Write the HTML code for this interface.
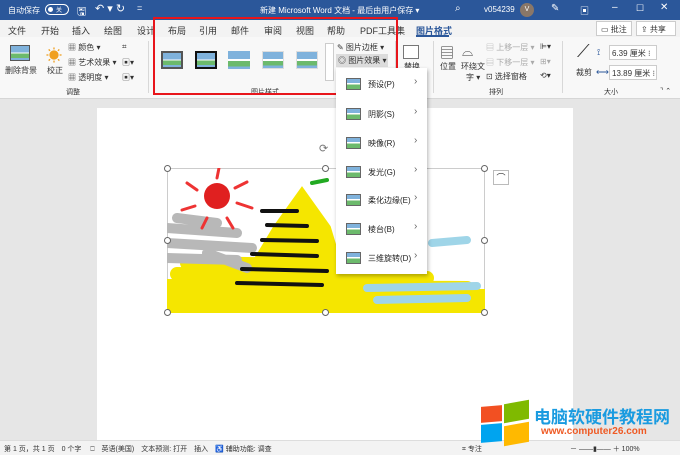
<!DOCTYPE html>
<html><head><meta charset="utf-8"><style>
*{margin:0;padding:0;box-sizing:border-box}
body{width:680px;height:455px;overflow:hidden;font-family:"Liberation Sans","Noto Sans CJK SC",sans-serif;font-size:9px;color:#333;position:relative;background:#e6e6e6}
.a{position:absolute}
.title{left:0;top:0;width:680px;height:20px;background:#2b579a;color:#fff}
.tabs{left:0;top:20px;width:680px;height:17px;background:#f3f3f3}
.rib{left:0;top:37px;width:680px;height:62px;background:#f8f8f8;border-bottom:1px solid #d6d6d6}
.t{position:absolute;white-space:nowrap}
.sep{position:absolute;top:41px;width:1px;height:52px;background:#d8d8d8}
.pic{position:absolute;width:30px;height:22px;border:1px solid #555;background:linear-gradient(#7fb2dc 0 45%,#fff 45% 55%,#6cba6c 55% 85%,#7fb2dc 85%)}
.mi{position:absolute;left:346px;width:80px;height:16px}
.mi .ic{position:absolute;left:0;top:0;width:15px;height:12px;border:1px solid #666;background:linear-gradient(#7fb2dc 0 40%,#fff 40% 55%,#6cba6c 55%)}
.mi .tx{position:absolute;left:22px;top:1px;font-size:8px;color:#222}
.mi .ar{position:absolute;left:68px;top:-2px;font-size:10px;color:#666}
.h{position:absolute;width:7px;height:7px;border:1px solid #666;border-radius:50%;background:#fff}
</style></head><body>
<div class="a title">
<span class="t" style="left:8px;top:5px;font-size:8px">自动保存</span>
<div class="a" style="left:45px;top:4px;width:24px;height:11px;border:1px solid #fff;border-radius:6px"><div class="a" style="left:2px;top:2px;width:5px;height:5px;background:#fff;border-radius:50%"></div><span class="t" style="left:10px;top:0;font-size:6px">关</span></div>
<span class="t" style="left:77px;top:3px;font-size:11px">🖫</span>
<span class="t" style="left:95px;top:2px;font-size:11px">↶ ▾ ↻</span>
<span class="t" style="left:137px;top:3px;font-size:9px">=</span>
<span class="t" style="left:260px;top:5px;font-size:8px">新建 Microsoft Word 文档 - 最后由用户保存 ▾</span>
<span class="t" style="left:455px;top:3px;font-size:10px">⌕</span>
<span class="t" style="left:484px;top:5px;font-size:8px">v054239</span>
<div class="a" style="left:520px;top:3px;width:14px;height:14px;border-radius:50%;background:#8a7768;text-align:center;font-size:7px;line-height:14px">V</div>
<span class="t" style="left:551px;top:3px;font-size:10px">✎</span>
<span class="t" style="left:580px;top:4px;font-size:9px">▣</span>
<span class="t" style="left:612px;top:2px;font-size:10px">–</span>
<span class="t" style="left:636px;top:3px;font-size:9px">☐</span>
<span class="t" style="left:660px;top:2px;font-size:10px">✕</span>
</div>
<div class="a tabs">
<span class="t" style="left:8px;top:4px">文件</span><span class="t" style="left:41px;top:4px">开始</span><span class="t" style="left:72px;top:4px">插入</span><span class="t" style="left:104px;top:4px">绘图</span><span class="t" style="left:137px;top:4px">设计</span><span class="t" style="left:168px;top:4px">布局</span><span class="t" style="left:199px;top:4px">引用</span><span class="t" style="left:231px;top:4px">邮件</span><span class="t" style="left:264px;top:4px">审阅</span><span class="t" style="left:296px;top:4px">视图</span><span class="t" style="left:327px;top:4px">帮助</span><span class="t" style="left:360px;top:4px">PDF工具集</span>
<span class="t" style="left:416px;top:4px;color:#2b579a;font-weight:bold">图片格式</span>
<div class="a" style="left:416px;top:15px;width:33px;height:2px;background:#2b579a"></div>
<div class="a" style="left:596px;top:1px;width:36px;height:15px;border:1px solid #ccc;background:#fff"><span class="t" style="left:4px;top:2px;font-size:8px">▭ 批注</span></div>
<div class="a" style="left:636px;top:1px;width:40px;height:15px;border:1px solid #ccc;background:#fff"><span class="t" style="left:4px;top:2px;font-size:8px">⇪ 共享</span></div>
</div>
<div class="a rib">
<div class="pic" style="left:10px;top:8px;width:20px;height:16px"></div>
<span class="t" style="left:5px;top:28px;font-size:8px">删除背景</span>
<span class="t" style="left:46px;top:5px;font-size:16px;color:#f0a020">☀</span>
<span class="t" style="left:47px;top:28px;font-size:8px">校正</span>
<span class="t" style="left:68px;top:5px;font-size:8px">▦ 颜色 ▾</span>
<span class="t" style="left:68px;top:20px;font-size:8px">▦ 艺术效果 ▾</span>
<span class="t" style="left:68px;top:35px;font-size:8px">▦ 透明度 ▾</span>
<span class="t" style="left:122px;top:5px;font-size:8px">⌗</span><span class="t" style="left:122px;top:20px;font-size:8px">▣▾</span><span class="t" style="left:122px;top:35px;font-size:8px">▣▾</span>
<span class="t" style="left:66px;top:50px;font-size:7px">调整</span>
<div class="pic" style="left:161px;top:14px;width:22px;height:18px;border:2px solid #555"></div>
<div class="pic" style="left:195px;top:14px;width:22px;height:18px;border:2px solid #111"></div>
<div class="pic" style="left:228px;top:14px;width:22px;height:18px;border:none"></div>
<div class="pic" style="left:262px;top:14px;width:22px;height:18px;border:1px solid #ddd"></div>
<div class="pic" style="left:296px;top:14px;width:22px;height:18px;border:1px solid #ddd"></div>
<div class="a" style="left:325px;top:6px;width:9px;height:38px;border:1px solid #ccc;background:#fff"></div>
<span class="t" style="left:251px;top:50px;font-size:7px">图片样式</span>
<span class="t" style="left:337px;top:5px;font-size:8px">✎ 图片边框 ▾</span>
<div class="a" style="left:336px;top:17px;width:52px;height:13px;background:#dcdcdc"></div>
<span class="t" style="left:338px;top:18px;font-size:8px">◎ 图片效果 ▾</span>
<div class="pic" style="left:403px;top:8px;width:16px;height:14px;border:1px solid #777;background:#fff"></div>
<span class="t" style="left:404px;top:24px;font-size:8px">替换</span>
<span class="t" style="left:440px;top:6px;font-size:14px">▤</span>
<span class="t" style="left:440px;top:24px;font-size:8px">位置</span>
<span class="t" style="left:462px;top:6px;font-size:14px">⌓</span>
<span class="t" style="left:461px;top:24px;font-size:8px">环绕文</span><span class="t" style="left:466px;top:35px;font-size:8px">字 ▾</span>
<span class="t" style="left:486px;top:5px;font-size:8px;color:#aaa">▤ 上移一层 ▾</span>
<span class="t" style="left:486px;top:20px;font-size:8px;color:#aaa">▤ 下移一层 ▾</span>
<span class="t" style="left:486px;top:34px;font-size:8px">⊡ 选择窗格</span>
<span class="t" style="left:540px;top:5px;font-size:8px">⊫▾</span><span class="t" style="left:540px;top:20px;font-size:8px;color:#aaa">⊞▾</span><span class="t" style="left:540px;top:34px;font-size:8px">⟲▾</span>
<span class="t" style="left:489px;top:50px;font-size:7px">排列</span>
<span class="t" style="left:577px;top:4px;font-size:18px">⟋</span>
<span class="t" style="left:576px;top:30px;font-size:8px">裁剪</span>
<span class="t" style="left:597px;top:10px;font-size:9px;color:#2b579a">⟟</span>
<div class="a" style="left:609px;top:8px;width:48px;height:15px;border:1px solid #ccc;background:#fff"><span class="t" style="left:2px;top:2px;font-size:8px">6.39 厘米 ⁝</span></div>
<span class="t" style="left:596px;top:30px;font-size:9px;color:#2b579a">⟷</span>
<div class="a" style="left:609px;top:28px;width:48px;height:15px;border:1px solid #ccc;background:#fff"><span class="t" style="left:2px;top:2px;font-size:8px">13.89 厘米 ⁝</span></div>
<span class="t" style="left:604px;top:50px;font-size:7px">大小</span>
<span class="t" style="left:660px;top:50px;font-size:7px">⌝ ⌃</span>
</div>
<div class="sep" style="left:148px"></div><div class="sep" style="left:395px"></div><div class="sep" style="left:433px"></div><div class="sep" style="left:562px"></div>
<div class="a" style="left:153px;top:17px;width:245px;height:78px;border:2px solid #e8151b"></div>
<div class="a" style="left:97px;top:108px;width:476px;height:332px;background:#fff"></div>
<svg class="a" style="left:167px;top:168px" width="318" height="145" viewBox="0 0 318 145">
<rect width="318" height="145" fill="#fff" stroke="#999"/>
<g stroke-linecap="round" fill="none">
<path d="M0 130 L318 128 M0 118 L300 120 M10 106 L260 110 M20 95 L210 98 M0 140 L318 138" stroke="#f5e600" stroke-width="14"/>
<path d="M80 110 L110 60 L135 25 L160 60 L175 110 Z" fill="#f5e600" stroke="#f5e600" stroke-width="8"/>
<path d="M0 60 L70 65 M0 75 L85 80 M0 90 L70 92 M10 50 L50 55 M40 85 L80 100" stroke="#b8b8b8" stroke-width="10"/>
<path d="M95 43 L130 43 M100 57 L140 58 M95 72 L150 73 M85 86 L150 88 M75 101 L160 103 M70 115 L155 117" stroke="#111" stroke-width="4"/>
<path d="M200 120 L310 118 M210 132 L300 130 M265 75 L300 72" stroke="#9fd5e8" stroke-width="8"/>
<path d="M50 10 L52 0 M30 22 L20 15 M28 38 L15 42 M68 20 L80 14 M70 35 L85 40 M40 50 L35 60 M60 50 L66 60" stroke="#e33" stroke-width="3"/>
<path d="M145 15 L160 12" stroke="#2a2" stroke-width="4"/>
</g>
<circle cx="50" cy="28" r="13" fill="#e02020"/>
</svg>
<div class="h" style="left:164px;top:165px"></div><div class="h" style="left:322px;top:165px"></div><div class="h" style="left:481px;top:165px"></div>
<div class="h" style="left:164px;top:237px"></div><div class="h" style="left:481px;top:237px"></div>
<div class="h" style="left:164px;top:309px"></div><div class="h" style="left:322px;top:309px"></div><div class="h" style="left:481px;top:309px"></div>
<span class="t" style="left:319px;top:142px;font-size:11px;color:#777">⟳</span>
<div class="a" style="left:493px;top:170px;width:16px;height:15px;border:1px solid #bbb;background:#fff;font-size:9px;text-align:center">⌒</div>
<div class="a" style="left:336px;top:68px;width:91px;height:206px;background:#fff;box-shadow:1px 2px 4px rgba(0,0,0,.3)"></div>
<div class="mi" style="top:78px"><div class="ic"></div><span class="tx">预设(P)</span><span class="ar">›</span></div>
<div class="mi" style="top:108px"><div class="ic"></div><span class="tx">阴影(S)</span><span class="ar">›</span></div>
<div class="mi" style="top:137px"><div class="ic"></div><span class="tx">映像(R)</span><span class="ar">›</span></div>
<div class="mi" style="top:166px"><div class="ic"></div><span class="tx">发光(G)</span><span class="ar">›</span></div>
<div class="mi" style="top:194px"><div class="ic"></div><span class="tx">柔化边缘(E)</span><span class="ar">›</span></div>
<div class="mi" style="top:223px"><div class="ic"></div><span class="tx">棱台(B)</span><span class="ar">›</span></div>
<div class="mi" style="top:252px"><div class="ic"></div><span class="tx">三维旋转(D)</span><span class="ar">›</span></div>
<div class="a" style="left:0;top:440px;width:680px;height:15px;background:#f3f3f3;border-top:1px solid #ddd"></div>
<span class="t" style="left:4px;top:444px;font-size:7px">第 1 页，共 1 页　0 个字　 ⎕　英语(美国)　文本预测: 打开　插入　♿ 辅助功能: 调查</span>
<span class="t" style="left:462px;top:444px;font-size:7px">⌗ 专注</span>
<span class="t" style="left:570px;top:444px;font-size:7px">－ ——▮—— ＋ 100%</span>
<div class="a" style="left:481px;top:406px;width:21px;height:16px;background:#f25022;transform:skewY(-5deg)"></div>
<div class="a" style="left:504px;top:402px;width:25px;height:19px;background:#7fba00;transform:skewY(-10deg)"></div>
<div class="a" style="left:481px;top:424px;width:21px;height:18px;background:#00a4ef;transform:skewY(-5deg)"></div>
<div class="a" style="left:504px;top:424px;width:25px;height:20px;background:#ffb900;transform:skewY(-10deg)"></div>
<span class="t" style="left:534px;top:403px;font-size:17px;font-weight:bold;color:#1a9be0">电脑软硬件教程网</span>
<span class="t" style="left:541px;top:426px;font-size:10px;font-weight:bold;color:#ef5a24">www.computer26.com</span>
</body></html>
